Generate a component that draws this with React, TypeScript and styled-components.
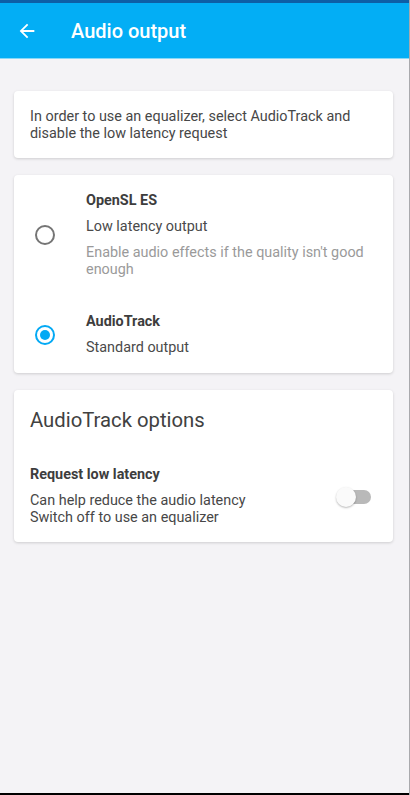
import styled, { createGlobalStyle } from "styled-components";
import { useState } from "react";

const GlobalStyle = createGlobalStyle`
  html, body {
    margin: 0;
    padding: 0;
    background: #f4f3f6;
  }
  body {
    font-family: Roboto, "Noto Sans", sans-serif;
  }
`;

const Screen = styled.div`
  display: flex;
  flex-direction: column;
  height: 100vh;
  box-sizing: border-box;
  border-right: 1px solid #a9a9ad;
  background: #f4f3f6;
`;

const StatusBar = styled.div`
  height: 3px;
  background: #0d5fa6;
`;

const AppBar = styled.header`
  display: flex;
  align-items: center;
  height: 55px;
  padding-left: 15px;
  gap: 32px;
  background: #03aef5;
  border-bottom: 1px solid #86d8f8;
`;

const BackButton = styled.button`
  display: flex;
  align-items: center;
  justify-content: center;
  width: 24px;
  height: 24px;
  padding: 0;
  border: none;
  background: none;
`;

const Title = styled.h1`
  margin: 0;
  font-size: 20px;
  font-weight: 500;
  color: #ffffff;
`;

const Content = styled.main`
  flex: 1;
  display: flex;
  flex-direction: column;
  gap: 17px;
  padding: 32px 16px 0 14px;
`;

const Card = styled.section`
  background: #ffffff;
  border-radius: 4px;
  box-shadow: 0 1px 3px rgba(0, 0, 0, 0.16);
`;

const InfoCard = styled(Card)`
  padding: 17px 16px 16px 16px;
  font-size: 14.4px;
  line-height: 17px;
  color: #474747;
`;

const RadioCard = styled(Card)`
  padding: 0 0 0 21px;
`;

const RadioRow = styled.label<{ $top: number; $bottom: number }>`
  display: flex;
  align-items: center;
  gap: 31px;
  padding: ${(p) => p.$top}px 16px ${(p) => p.$bottom}px 0;
  cursor: pointer;
`;

const RadioCircle = styled.span<{ $checked: boolean }>`
  flex-shrink: 0;
  display: flex;
  align-items: center;
  justify-content: center;
  width: 20px;
  height: 20px;
  box-sizing: border-box;
  border-radius: 50%;
  border: 2px solid ${(p) => (p.$checked ? "#03a9f4" : "#757575")};

  &::after {
    content: "";
    display: ${(p) => (p.$checked ? "block" : "none")};
    width: 10px;
    height: 10px;
    border-radius: 50%;
    background: #03a9f4;
  }
`;

const TextBlock = styled.div`
  display: flex;
  flex-direction: column;
`;

const ItemTitle = styled.div`
  font-size: 14.4px;
  font-weight: 700;
  line-height: 20px;
  color: #3d3d3d;
`;

const Summary = styled.div`
  margin-top: 6px;
  font-size: 14.4px;
  line-height: 20px;
  color: #4a4a4a;
`;

const Hint = styled.div`
  margin-top: 7px;
  font-size: 14.4px;
  line-height: 17px;
  color: #9a9a9a;
`;

const OptionsCard = styled(Card)`
  padding: 18px 22px 16px 16px;
`;

const SectionTitle = styled.h2`
  margin: 0 0 33px;
  font-size: 20.3px;
  font-weight: 400;
  line-height: 24px;
  color: #414141;
`;

const SwitchRow = styled.div`
  display: flex;
  align-items: flex-end;
  justify-content: space-between;
`;

const SwitchText = styled.div`
  display: flex;
  flex-direction: column;
  gap: 7px;
`;

const Description = styled.div`
  font-size: 14.4px;
  line-height: 17px;
  color: #474747;
`;

const SwitchTrack = styled.button<{ $on: boolean }>`
  position: relative;
  width: 32px;
  height: 14px;
  margin-bottom: 22px;
  padding: 0;
  border: none;
  border-radius: 7px;
  background: ${(p) => (p.$on ? "#8fd6f7" : "#b9b9b9")};
  cursor: pointer;
`;

const SwitchThumb = styled.span<{ $on: boolean }>`
  position: absolute;
  top: -3px;
  left: ${(p) => (p.$on ? "14px" : "-3px")};
  width: 20px;
  height: 20px;
  border-radius: 50%;
  background: ${(p) => (p.$on ? "#03a9f4" : "#fafafa")};
  box-shadow: 0 1px 2px rgba(0, 0, 0, 0.28);
`;

const BottomBar = styled.div`
  height: 2px;
  background: #000000;
`;

function BackArrow() {
  return (
    <svg width="22" height="22" viewBox="0 0 24 24" fill="#ffffff">
      <path d="M20 11H7.83l5.59-5.59L12 4l-8 8 8 8 1.41-1.41L7.83 13H20v-2z" />
    </svg>
  );
}

export default function App() {
  const [output, setOutput] = useState<string>("audiotrack");
  const [lowLatency, setLowLatency] = useState<boolean>(false);

  return (
    <>
      <GlobalStyle />
      <Screen>
        <StatusBar />
        <AppBar>
          <BackButton aria-label="Back">
            <BackArrow />
          </BackButton>
          <Title>Audio output</Title>
        </AppBar>
        <Content>
          <InfoCard>
            In order to use an equalizer, select AudioTrack and disable the
            low latency request
          </InfoCard>
          <RadioCard>
            <RadioRow $top={16} $bottom={17} onClick={() => setOutput("opensl")}>
              <RadioCircle $checked={output === "opensl"} />
              <TextBlock>
                <ItemTitle>OpenSL ES</ItemTitle>
                <Summary>Low latency output</Summary>
                <Hint>Enable audio effects if the quality isn't good enough</Hint>
              </TextBlock>
            </RadioRow>
            <RadioRow
              $top={17}
              $bottom={15}
              onClick={() => setOutput("audiotrack")}
            >
              <RadioCircle $checked={output === "audiotrack"} />
              <TextBlock>
                <ItemTitle>AudioTrack</ItemTitle>
                <Summary>Standard output</Summary>
              </TextBlock>
            </RadioRow>
          </RadioCard>
          <OptionsCard>
            <SectionTitle>AudioTrack options</SectionTitle>
            <SwitchRow>
              <SwitchText>
                <ItemTitle>Request low latency</ItemTitle>
                <Description>
                  Can help reduce the audio latency
                  <br />
                  Switch off to use an equalizer
                </Description>
              </SwitchText>
              <SwitchTrack
                $on={lowLatency}
                aria-label="Request low latency"
                onClick={() => setLowLatency((prev) => !prev)}
              >
                <SwitchThumb $on={lowLatency} />
              </SwitchTrack>
            </SwitchRow>
          </OptionsCard>
        </Content>
        <BottomBar />
      </Screen>
    </>
  );
}
